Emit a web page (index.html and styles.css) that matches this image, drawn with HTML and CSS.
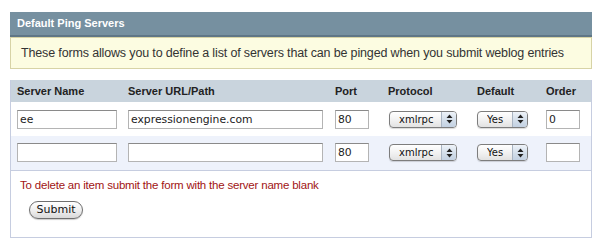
FILE: index.html
```html
<!DOCTYPE html>
<html lang="en">
<head>
    <meta charset="UTF-8">
    <title>Default Ping Servers</title>
    <link rel="stylesheet" href="styles.css">
</head>
<body>
    <div class="page">
        <div class="panel-title">Default Ping Servers</div>
        <div class="notice">These forms allows you to define a list of servers that can be pinged when you submit weblog entries</div>

        <form class="ping-box" action="#" method="POST">
            <table class="ping-table">
                <colgroup>
                    <col class="c-name">
                    <col class="c-url">
                    <col class="c-port">
                    <col class="c-proto">
                    <col class="c-default">
                    <col class="c-order">
                </colgroup>
                <thead>
                    <tr>
                        <th>Server Name</th>
                        <th>Server URL/Path</th>
                        <th>Port</th>
                        <th>Protocol</th>
                        <th>Default</th>
                        <th>Order</th>
                    </tr>
                </thead>
                <tbody>
                    <tr>
                        <td><input class="field w-name" type="text" name="server_name_1" value="ee"></td>
                        <td><input class="field w-url" type="text" name="server_url_1" value="expressionengine.com"></td>
                        <td><input class="field w-small" type="text" name="server_port_1" value="80"></td>
                        <td>
                            <span class="aqua-select w-proto">
                                <select name="ping_protocol_1"><option>xmlrpc</option></select>
                                <span class="arrows"><svg width="7" height="10" viewBox="0 0 7 10"><path d="M3.5 0.5 L6.5 4 L0.5 4 Z M0.5 6 L6.5 6 L3.5 9.5 Z" fill="#222"/></svg></span>
                            </span>
                        </td>
                        <td>
                            <span class="aqua-select w-default">
                                <select name="is_default_1"><option>Yes</option><option>No</option></select>
                                <span class="arrows"><svg width="7" height="10" viewBox="0 0 7 10"><path d="M3.5 0.5 L6.5 4 L0.5 4 Z M0.5 6 L6.5 6 L3.5 9.5 Z" fill="#222"/></svg></span>
                            </span>
                        </td>
                        <td><input class="field w-small" type="text" name="server_order_1" value="0"></td>
                    </tr>
                    <tr class="alt">
                        <td><input class="field w-name" type="text" name="server_name_2" value=""></td>
                        <td><input class="field w-url" type="text" name="server_url_2" value=""></td>
                        <td><input class="field w-small" type="text" name="server_port_2" value="80"></td>
                        <td>
                            <span class="aqua-select w-proto">
                                <select name="ping_protocol_2"><option>xmlrpc</option></select>
                                <span class="arrows"><svg width="7" height="10" viewBox="0 0 7 10"><path d="M3.5 0.5 L6.5 4 L0.5 4 Z M0.5 6 L6.5 6 L3.5 9.5 Z" fill="#222"/></svg></span>
                            </span>
                        </td>
                        <td>
                            <span class="aqua-select w-default">
                                <select name="is_default_2"><option>Yes</option><option>No</option></select>
                                <span class="arrows"><svg width="7" height="10" viewBox="0 0 7 10"><path d="M3.5 0.5 L6.5 4 L0.5 4 Z M0.5 6 L6.5 6 L3.5 9.5 Z" fill="#222"/></svg></span>
                            </span>
                        </td>
                        <td><input class="field w-small" type="text" name="server_order_2" value=""></td>
                    </tr>
                </tbody>
            </table>

            <div class="form-foot">
                <p class="alert">To delete an item submit the form with the server name blank</p>
                <button type="submit" class="aqua-btn">Submit</button>
            </div>
        </form>
    </div>
</body>
</html>
```

FILE: styles.css
```css
* {
    margin: 0;
    padding: 0;
    box-sizing: border-box;
}

body {
    background-color: #fff;
    color: #333;
    font-family: 'Liberation Sans', Arial, sans-serif;
}

.page {
    width: 582px;
    margin: 12px 0 0 10px;
}

.panel-title {
    height: 25px;
    padding: 0 7px;
    line-height: 23px;
    background-color: #7690a0;
    border-bottom: 2px solid #5f7686;
    color: #fff;
    font-size: 11px;
    font-weight: bold;
}

.notice {
    height: 32px;
    padding: 0 10px;
    line-height: 30px;
    background-color: #fcfce1;
    border: 1px solid #d7d3a6;
    font-size: 12.5px;
    letter-spacing: -0.15px;
    white-space: nowrap;
    color: #333;
}

.ping-box {
    margin-top: 11px;
    border: 1px solid #c6cde0;
    border-top: none;
}

.ping-table {
    width: 580px;
    table-layout: fixed;
    border-collapse: collapse;
}

.c-name { width: 111px; }
.c-url { width: 207px; }
.c-port { width: 53px; }
.c-proto { width: 89px; }
.c-default { width: 69px; }
.c-order { width: 51px; }

.ping-table th {
    height: 22px;
    padding: 0 6px;
    background-color: #c9d4dd;
    color: #222;
    font-size: 11px;
    font-weight: bold;
    text-align: left;
}

.ping-table td {
    height: 34px;
    padding: 0 6px;
    vertical-align: middle;
}

.ping-table tr.alt td {
    background-color: #eef2fb;
    border-bottom: 1px solid #c6cde0;
}

.field {
    display: block;
    height: 19px;
    padding: 0 2px;
    border: 1px solid #b4b4b4;
    border-top-color: #8a8a8a;
    background-color: #fff;
    color: #222;
    font-family: 'DejaVu Sans', sans-serif;
    font-size: 10.8px;
    outline: none;
}

.w-name { width: 100px; }
.w-url { width: 195px; }
.w-small { width: 34px; }

.aqua-select {
    position: relative;
    display: block;
    height: 17px;
}

.w-proto { width: 68px; margin-left: 1px; }
.w-default { width: 51px; }

.aqua-select select {
    -webkit-appearance: none;
    appearance: none;
    display: block;
    width: 100%;
    height: 17px;
    padding: 0 0 0 9px;
    border: 1px solid #7d7d7d;
    border-radius: 4px;
    background: linear-gradient(#ffffff, #f1f1f1 55%, #e2e2e2);
    box-shadow: 0 1px 1px rgba(0,0,0,0.15);
    color: #111;
    font-family: 'DejaVu Sans', sans-serif;
    font-size: 10px;
    line-height: 15px;
}

.aqua-select .arrows {
    position: absolute;
    top: 1px;
    right: 1px;
    bottom: 1px;
    width: 15px;
    display: flex;
    align-items: center;
    justify-content: center;
    border-left: 1px solid #a9b4c2;
    border-radius: 0 3px 3px 0;
    background: linear-gradient(#eef3f9, #d3deea 55%, #c3d1e2);
    pointer-events: none;
}

.form-foot {
    padding: 7px 9px 18px;
}

.alert {
    color: #a11414;
    font-size: 11.5px;
    letter-spacing: -0.2px;
    line-height: 15px;
}

.aqua-btn {
    display: block;
    width: 54px;
    height: 18px;
    margin: 8px 0 0 9px;
    border: 1px solid #6f6f6f;
    border-radius: 9px;
    background: linear-gradient(#ffffff, #f0f0f0 50%, #d9d9d9);
    box-shadow: 0 1px 1px rgba(0,0,0,0.2);
    color: #111;
    font-family: 'DejaVu Sans', sans-serif;
    font-size: 11px;
    line-height: 16px;
    cursor: pointer;
}
```
